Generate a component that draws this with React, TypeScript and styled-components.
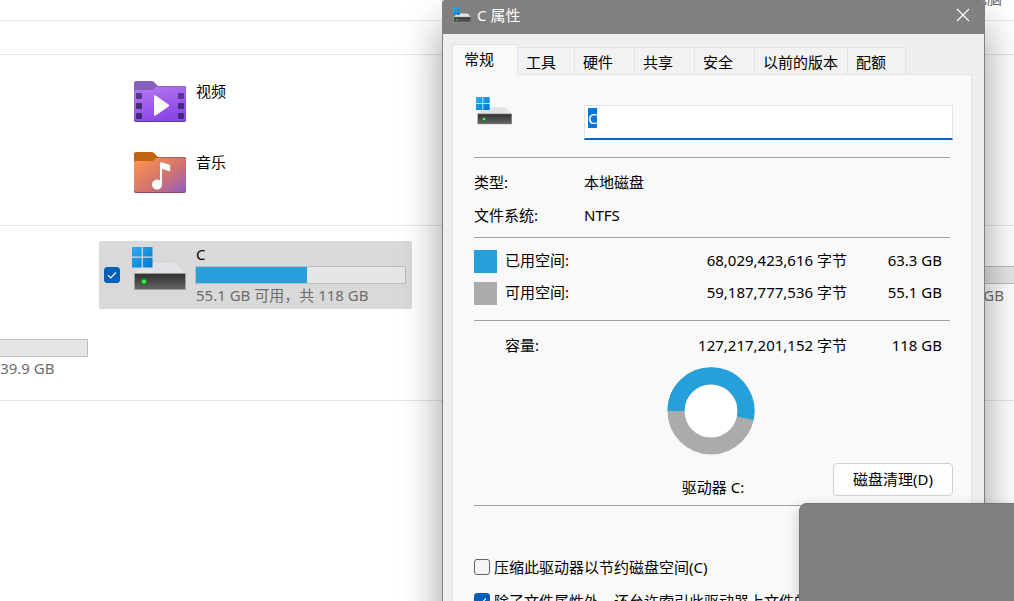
import React, { useEffect, useId, useRef } from "react";
import styled, { createGlobalStyle } from "styled-components";

const GlobalStyle = createGlobalStyle`
  * { box-sizing: border-box; }
  body {
    margin: 0;
    background: #fff;
    color: #000;
    font: 15px/20px "Noto Sans", "Noto Sans CJK SC", sans-serif;
  }
  button, input { font: inherit; color: inherit; }
`;

const Desktop = styled.div`
  position: relative;
  height: 100vh;
  overflow: hidden;
`;

/* ---------- file explorer ---------- */

const Explorer = styled.main`
  display: flex;
  flex-direction: column;
`;

const AddressBar = styled.header`
  display: flex;
  align-items: flex-end;
  justify-content: flex-end;
  height: 21px;
  padding: 0 12px 12px 0;
  border-bottom: 1px solid #e5e5e5;
  color: #666;
`;

const CommandBar = styled.div`
  height: 34px;
  border-bottom: 1px solid #e5e5e5;
`;

const FolderGroup = styled.section`
  display: flex;
  flex-direction: column;
  gap: 29px;
  padding: 25px 0 32px 133px;
  border-bottom: 1px solid #e5e5e5;
`;

const FolderItem = styled.a`
  display: flex;
  gap: 9px;
  height: 42px;
  line-height: 22px;
  color: inherit;
  text-decoration: none;
`;

const DriveGroup = styled.section`
  overflow: hidden;
  padding: 15px 0 18px;
  border-bottom: 1px solid #e5e5e5;
`;

const DriveGrid = styled.div`
  display: grid;
  grid-template-columns: repeat(4, 313px);
  grid-auto-rows: 68px;
  gap: 5px;
  margin-left: -219px;
`;

const DriveTile = styled.div<{ $column: number; $selected?: boolean }>`
  grid-column: ${(p) => p.$column};
  display: flex;
  align-items: center;
  padding: 0 6px 0 5px;
  border-radius: 2px;
  background: ${(p) => (p.$selected ? "#d9d9d9" : "transparent")};
`;

const DriveArt = styled.div`
  width: 54px;
  height: 56px;
  margin: 0 9px 0 12px;
`;

const DriveInfo = styled.div`
  flex: 1;
  align-self: flex-start;
  display: flex;
  flex-direction: column;
  padding-top: 3px;
  color: #6d6d6d;
`;

const DriveName = styled.span`
  height: 22px;
  padding-left: 1px;
  color: #000;
`;

const Gauge = styled.div`
  height: 18px;
  margin-bottom: 1px;
  border: 1px solid #bcbcbc;
  background: #e6e6e6;
`;

const GaugeFill = styled.div`
  height: 100%;
  background: #26a0da;
`;

const DriveSpace = styled.span<{ $end?: boolean }>`
  padding: ${(p) => (p.$end ? "0 38px 0 0" : "0 0 0 1px")};
  text-align: ${(p) => (p.$end ? "right" : "left")};
  white-space: nowrap;
`;

/* ---------- check box ---------- */

const CheckWrap = styled.span`
  position: relative;
  display: flex;
  flex: none;
  width: 16px;
  height: 16px;
`;

const CheckInput = styled.input`
  appearance: none;
  width: 16px;
  height: 16px;
  margin: 0;
  border: 1px solid #626262;
  border-radius: 3px;
  background: #f5f5f5;
  &:checked {
    border-color: #005fb8;
    background: #005fb8;
  }
  & + svg { display: none; }
  &:checked + svg { display: block; }
`;

const CheckMark = styled.svg`
  position: absolute;
  inset: 0;
  pointer-events: none;
`;

/* ---------- properties dialog ---------- */

const Dialog = styled.div`
  position: absolute;
  top: 0;
  left: 442px;
  right: 29px;
  min-height: 120%;
  display: flex;
  flex-direction: column;
  border: 1px solid #808080;
  border-top: 0;
  border-radius: 3px 3px 0 0;
  background: #efefef;
  box-shadow: 0 26px 40px rgba(0, 0, 0, 0.4);
`;

const TitleBar = styled.header`
  display: flex;
  align-items: center;
  gap: 6px;
  height: 34px;
  padding: 0 6px 4px 10px;
  background: #808080;
  border-radius: 2px 2px 0 0;
  color: #fff;
`;

const DialogTitle = styled.h1`
  flex: 1;
  margin: 0;
  font: inherit;
`;

const CloseButton = styled.button`
  display: grid;
  place-items: center;
  width: 30px;
  height: 30px;
  padding: 0;
  border: 0;
  background: none;
`;

const TabStrip = styled.div`
  display: flex;
  align-items: flex-end;
  padding: 10px 9px 0;
`;

const Tab = styled.button<{ $width: number; $active?: boolean }>`
  width: ${(p) => p.$width}px;
  height: ${(p) => (p.$active ? 31 : 27)}px;
  padding: ${(p) => (p.$active ? "0 0 2px 11px" : "2px 0 0 8px")};
  border: 1px solid #e3e3e3;
  border-bottom: 0;
  border-left-width: ${(p) => (p.$active ? 1 : 0)}px;
  background: ${(p) => (p.$active ? "#f9f9f9" : "#f2f2f2")};
  margin-bottom: ${(p) => (p.$active ? -1 : 0)}px;
  position: relative;
  z-index: ${(p) => (p.$active ? 1 : 0)};
  text-align: left;
  white-space: nowrap;
`;

const Panel = styled.section`
  flex: 1;
  margin: 0 12px 12px 9px;
  padding: 22px 18px 0 21px;
  border: 1px solid #e3e3e3;
  background: #f9f9f9;
`;

const NameRow = styled.div`
  display: grid;
  grid-template-columns: 108px 1fr;
  align-items: start;
  height: 60px;
  padding-left: 2px;
`;

const NameInput = styled.input`
  width: 100%;
  height: 35px;
  margin-top: 8px;
  padding: 0 3px 8px;
  border: 1px solid #e3e3e3;
  border-bottom: 2px solid #0067c0;
  outline: 0;
  background: #fff;
  &::selection { background: #0078d7; color: #fff; }
`;

const Divider = styled.hr`
  height: 1px;
  margin: 0 3px 0 0;
  border: 0;
  background: #a0a0a0;
`;

const Details = styled.dl`
  display: grid;
  grid-template-columns: 110px 1fr;
  row-gap: 13px;
  margin: 0;
  padding: 14px 0 12px;
  dd { margin: 0; }
`;

const UsageTable = styled.table`
  width: 100%;
  margin: 8px 0 10px;
  border-collapse: collapse;
  table-layout: fixed;
  th, td {
    height: 32px;
    padding: 0 0 4px;
    font-weight: normal;
    text-align: right;
  }
  th { text-align: left; }
  td:first-child { width: 31px; padding: 0 0 2px; }
  th { width: 120px; }
  td:last-child { width: 106px; padding-right: 11px; }
`;

const CapacityTable = styled(UsageTable)`
  margin: 10px 0 4px;
`;

const Swatch = styled.span<{ $color: string }>`
  display: block;
  width: 23px;
  height: 23px;
  background: ${(p) => p.$color};
`;

const ChartRow = styled.div`
  display: grid;
  grid-template-columns: minmax(0, 193px) 88px 1fr;
  align-items: end;
  margin-bottom: 8px;
`;

const Chart = styled.figure`
  grid-column: 2;
  display: flex;
  flex-direction: column;
  align-items: center;
  gap: 22px;
  margin: 0;
  svg { display: block; }
`;

const Caption = styled.figcaption`
  padding-left: 4px;
  white-space: nowrap;
`;

const PushButton = styled.button`
  justify-self: end;
  width: 120px;
  height: 33px;
  margin-bottom: 1px;
  padding: 0 0 2px;
  border: 1px solid #d0d0d0;
  border-radius: 4px;
  background: #fdfdfd;
`;

const Options = styled.div`
  display: flex;
  flex-direction: column;
  gap: 14px;
  padding-top: 51px;
`;

const OptionLabel = styled.label`
  display: flex;
  align-items: center;
  gap: 4px;
  height: 20px;
  white-space: nowrap;
`;

const Overlay = styled.aside`
  position: absolute;
  top: 503px;
  right: 0;
  bottom: 0;
  left: 799px;
  border: 1px solid #747474;
  border-width: 1px 0 0 1px;
  border-top-left-radius: 8px;
  background: #808080;
  box-shadow: 0 4px 14px rgba(0, 0, 0, 0.2);
`;

/* ---------- drawings ---------- */

function DriveIcon({ width, height }: { width: number; height: number }) {
  const id = useId();
  return (
    <svg width={width} height={height} viewBox="0 0 54 44" preserveAspectRatio="none" aria-hidden="true">
      <defs>
        <linearGradient id={`${id}w`} x1="0" y1="0" x2="20" y2="20" gradientUnits="userSpaceOnUse">
          <stop offset="0" stopColor="#2bb0ee" />
          <stop offset="1" stopColor="#0078d4" />
        </linearGradient>
        <linearGradient id={`${id}b`} x1="0" y1="0" x2="0" y2="1">
          <stop offset="0" stopColor="#333" />
          <stop offset="1" stopColor="#646464" />
        </linearGradient>
      </defs>
      <path d="M12 16h30q2 0 3 1l9 10H2z" fill="#e2e3e6" />
      <rect x="2" y="26" width="52" height="17" rx="1" fill="#999" />
      <rect x="3" y="27" width="50" height="15" fill={`url(#${id}b)`} />
      <circle cx="12" cy="34.5" r="3.2" fill="#128a1c" />
      <circle cx="12" cy="34.5" r="2" fill="#3df24c" />
      <path d="M0 0h9.6v9.6H0zM10.8 0h9.7v9.6h-9.7zM0 10.8h9.6v9.7H0zM10.8 10.8h9.7v9.7h-9.7z" fill={`url(#${id}w)`} />
    </svg>
  );
}

const tabShape = "M1 12V3q0-2 2-2h15q2 0 3 1l4 4-3 4q-1 1-3 1H4z";
const folderShape = "M1 12q0-2 2-2h16q1 0 2-1l2-2q1-1 2-1h26q2 0 2 2v32q0 2-2 2H3q-2 0-2-2z";

function VideoFolder() {
  return (
    <svg width="54" height="43" viewBox="0 0 54 43" aria-hidden="true">
      <defs>
        <linearGradient id="video" x1="0" y1="0" x2=".4" y2="1">
          <stop offset="0" stopColor="#b77cf0" />
          <stop offset="1" stopColor="#8b46e6" />
        </linearGradient>
      </defs>
      <path d={tabShape} fill="#8460bd" />
      <path d={folderShape} fill="url(#video)" />
      <path d="M23 6.500h28q2 0 2 1.500" fill="none" stroke="#8a6aac" />
      <path d="M1.500 40q0 1.500 1.500 1.500h48q1.500 0 1.500-1.500" fill="none" stroke="#6634ae" />
      <g fill="#573690">
        <rect x="3" y="13" width="6" height="6" rx="1" />
        <rect x="45" y="13" width="6" height="6" rx="1" />
      </g>
      <g fill="#432b78">
        <rect x="3" y="23" width="6" height="6" rx="1" />
        <rect x="45" y="23" width="6" height="6" rx="1" />
        <rect x="3" y="33" width="6" height="6" rx="1" />
        <rect x="45" y="33" width="6" height="6" rx="1" />
      </g>
      <path d="M21 16.500q0-2 1.600-1l13 9q1.200 1 0 2l-13 9q-1.600 1-1.600-1z" fill="#fafafa" />
    </svg>
  );
}

function MusicFolder() {
  return (
    <svg width="54" height="43" viewBox="0 0 54 43" aria-hidden="true">
      <defs>
        <linearGradient id="music" x1="0" y1=".1" x2="1" y2="1">
          <stop offset="0" stopColor="#ff944f" />
          <stop offset=".55" stopColor="#d0726f" />
          <stop offset="1" stopColor="#8d5fc4" />
        </linearGradient>
      </defs>
      <path d={tabShape} fill="#c06312" />
      <path d={folderShape} fill="url(#music)" />
      <path d="M23 6.500h28q2 0 2 1.500" fill="none" stroke="#a56152" />
      <path d="M1.500 40q0 1.500 1.500 1.500h48q1.500 0 1.500-1.500" fill="none" stroke="#8f4c62" />
      <path d="M27 12q0-1 1.200-.8l8 2.300q1 .3 1 1.300v4.500q0 1.200-1.200.8L29 18v15.500a5 5 0 1 1-2-4z" fill="#fafafa" />
    </svg>
  );
}

function CheckBox(props: { defaultChecked?: boolean; "aria-label"?: string }) {
  return (
    <CheckWrap>
      <CheckInput type="checkbox" {...props} />
      <CheckMark width="16" height="16" viewBox="0 0 16 16" aria-hidden="true">
        <path d="M4 8.200l2.700 2.700L12 5.500" fill="none" stroke="#fff" strokeWidth="1.100" />
      </CheckMark>
    </CheckWrap>
  );
}

function UsageChart() {
  return (
    <svg width="88" height="88" viewBox="0 0 88 88" role="img" aria-label="磁盘使用情况">
      <circle cx="44" cy="44" r="35" fill="#fff" stroke="#ababab" strokeWidth="17" />
      <path d="M9 44a35 35 0 1 1 69.200 7.300" fill="none" stroke="#26a0da" strokeWidth="17" />
    </svg>
  );
}

const tabs = [
  { label: "常规", width: 66 },
  { label: "工具", width: 57 },
  { label: "硬件", width: 60 },
  { label: "共享", width: 60 },
  { label: "安全", width: 60 },
  { label: "以前的版本", width: 93 },
  { label: "配额", width: 58 },
];

function UsageRow(props: { label: string; bytes: string; size: string; color?: string }) {
  return (
    <tr>
      <td>{props.color && <Swatch $color={props.color} />}</td>
      <th scope="row">{props.label}</th>
      <td>{props.bytes} 字节</td>
      <td>{props.size}</td>
    </tr>
  );
}

function PropertiesDialog() {
  const nameRef = useRef<HTMLInputElement>(null);
  useEffect(() => {
    nameRef.current?.focus();
    nameRef.current?.select();
  }, []);

  return (
    <Dialog role="dialog" aria-labelledby="dialog-title">
      <TitleBar>
        <DriveIcon width={18} height={15} />
        <DialogTitle id="dialog-title">C 属性</DialogTitle>
        <CloseButton aria-label="关闭">
          <svg width="14" height="14" viewBox="0 0 14 14" aria-hidden="true">
            <path d="M1 1l12 12M13 1L1 13" stroke="#fff" strokeWidth="1.200" />
          </svg>
        </CloseButton>
      </TitleBar>
      <TabStrip role="tablist">
        {tabs.map((tab, i) => (
          <Tab key={tab.label} role="tab" aria-selected={i === 0} $active={i === 0} $width={tab.width}>
            {tab.label}
          </Tab>
        ))}
      </TabStrip>
      <Panel role="tabpanel">
        <NameRow>
          <DriveIcon width={36} height={28} />
          <NameInput ref={nameRef} defaultValue="C" aria-label="卷标" />
        </NameRow>
        <Divider />
        <Details>
          <dt>类型:</dt>
          <dd>本地磁盘</dd>
          <dt>文件系统:</dt>
          <dd>NTFS</dd>
        </Details>
        <Divider />
        <UsageTable>
          <tbody>
            <UsageRow color="#26a0da" label="已用空间:" bytes="68,029,423,616" size="63.3 GB" />
            <UsageRow color="#ababab" label="可用空间:" bytes="59,187,777,536" size="55.1 GB" />
          </tbody>
        </UsageTable>
        <Divider />
        <CapacityTable>
          <tbody>
            <UsageRow label="容量:" bytes="127,217,201,152" size="118 GB" />
          </tbody>
        </CapacityTable>
        <ChartRow>
          <Chart>
            <UsageChart />
            <Caption>驱动器 C:</Caption>
          </Chart>
          <PushButton>磁盘清理(D)</PushButton>
        </ChartRow>
        <Divider />
        <Options>
          <OptionLabel>
            <CheckBox />
            压缩此驱动器以节约磁盘空间(C)
          </OptionLabel>
          <OptionLabel>
            <CheckBox defaultChecked />
            除了文件属性外，还允许索引此驱动器上文件的内容(I)
          </OptionLabel>
        </Options>
      </Panel>
    </Dialog>
  );
}

export default function App() {
  return (
    <Desktop>
      <GlobalStyle />
      <Explorer>
        <AddressBar>此电脑</AddressBar>
        <CommandBar />
        <FolderGroup>
          <FolderItem href="#videos">
            <VideoFolder />
            视频
          </FolderItem>
          <FolderItem href="#music">
            <MusicFolder />
            音乐
          </FolderItem>
        </FolderGroup>
        <DriveGroup>
          <DriveGrid>
            <DriveTile $column={2} $selected>
              <CheckBox defaultChecked aria-label="选择 C" />
              <DriveArt>
                <DriveIcon width={54} height={44} />
              </DriveArt>
              <DriveInfo>
                <DriveName>C</DriveName>
                <Gauge>
                  <GaugeFill style={{ width: "53%" }} />
                </Gauge>
                <DriveSpace>55.1 GB 可用，共 118 GB</DriveSpace>
              </DriveInfo>
            </DriveTile>
            <DriveTile $column={4}>
              <CheckWrap />
              <DriveArt />
              <DriveInfo>
                <DriveName />
                <Gauge />
                <DriveSpace $end>118 GB</DriveSpace>
              </DriveInfo>
            </DriveTile>
            <DriveTile $column={1}>
              <CheckWrap />
              <DriveArt />
              <DriveInfo>
                <DriveName />
                <Gauge />
                <DriveSpace>22.6 GB 可用，共 39.9 GB</DriveSpace>
              </DriveInfo>
            </DriveTile>
          </DriveGrid>
        </DriveGroup>
      </Explorer>
      <PropertiesDialog />
      <Overlay />
    </Desktop>
  );
}
